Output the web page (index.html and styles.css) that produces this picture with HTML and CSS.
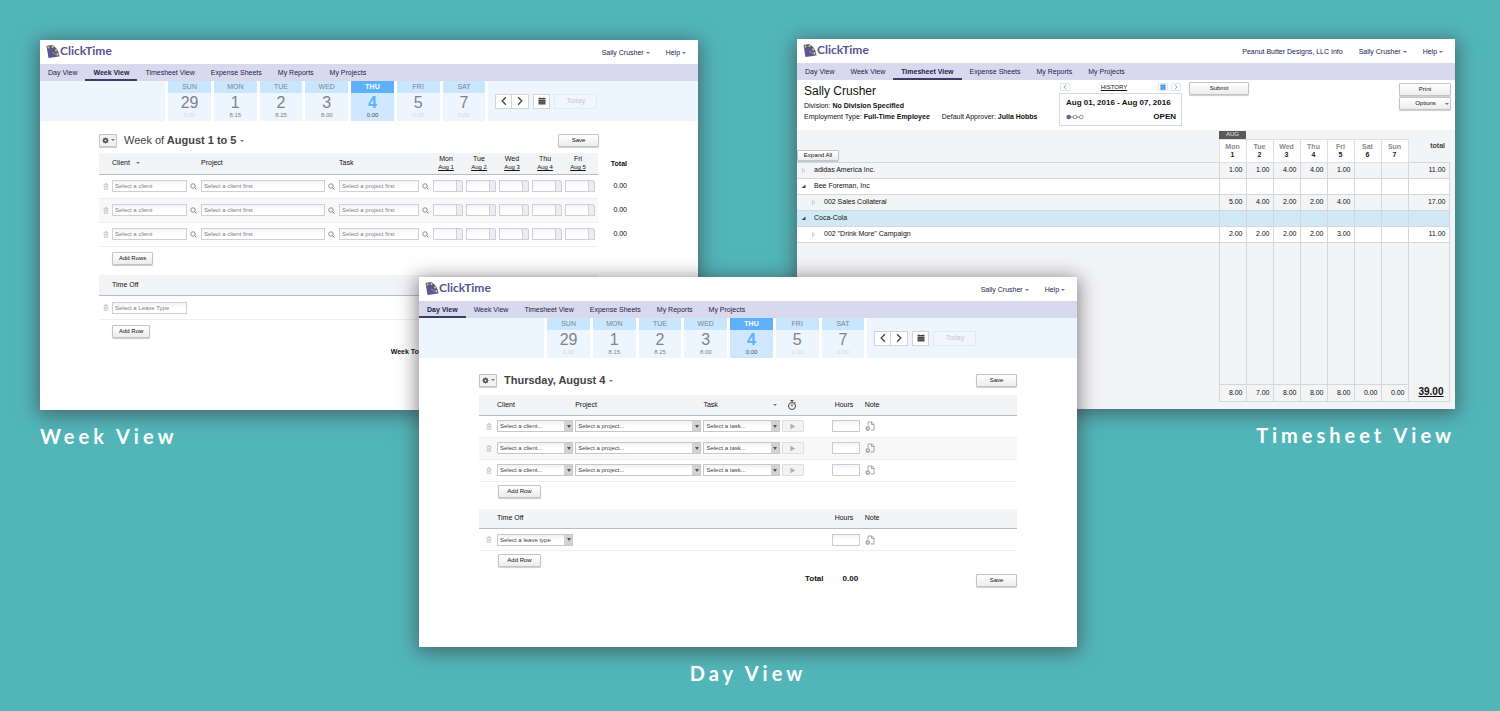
FILE: index.html
```
<!DOCTYPE html>
<html lang="en">
<head>
<meta charset="utf-8">
<title>ClickTime views</title>
<link rel="stylesheet" href="styles.css">
</head>
<body>
<svg class="sprite" aria-hidden="true">
  <symbol id="i-logo" viewBox="0 0 26 26">
    <path d="M0 2 L11 0 C18 3 25 12 26 23 L4 26 Z" fill="#58588f"/>
    <path d="M11 14 L26 24" stroke="#c9c9e0" stroke-width="1"/>
    <circle cx="4" cy="5" r="2" fill="#e2e03a"/><circle cx="12" cy="4" r="2" fill="#e2e03a"/><circle cx="19" cy="11" r="2" fill="#e2e03a"/><circle cx="22" cy="18" r="2" fill="#e2e03a"/>
  </symbol>
  <symbol id="i-trash" viewBox="0 0 10 12"><path d="M1 3h8M3.500 3V1h3v2M2 3v8h6V3M4 5v4M6 5v4" fill="none" stroke="#b4b4b4"/></symbol>
  <symbol id="i-search" viewBox="0 0 14 14"><circle cx="6" cy="6" r="4.500" fill="none" stroke="#777" stroke-width="1.600"/><path d="M9.500 9.500 13 13" stroke="#777" stroke-width="2"/></symbol>
  <symbol id="i-gear" viewBox="0 0 14 14"><circle cx="7" cy="7" r="3.500" fill="none" stroke="#444" stroke-width="3"/><path d="M7 1v12M1 7h12M3 3l8 8M11 3 3 11" stroke="#444" stroke-width="1.800"/><circle cx="7" cy="7" r="2" fill="#f4f4f4"/></symbol>
  <symbol id="i-left" viewBox="0 0 12 16"><path d="M9 2 3 8l6 6" fill="none" stroke="currentColor" stroke-width="2"/></symbol>
  <symbol id="i-right" viewBox="0 0 12 16"><path d="m3 2 6 6-6 6" fill="none" stroke="currentColor" stroke-width="2"/></symbol>
  <symbol id="i-cal" viewBox="0 0 16 16"><path d="M1 2h14v3H1zM1 6h14v9H1z" fill="currentColor"/><path d="M1 9h14M1 12h14" stroke="#fff" stroke-opacity=".35"/><path d="M4 1v2M12 1v2" stroke="currentColor" stroke-width="2"/></symbol>
  <symbol id="i-note" viewBox="0 0 20 20"><path d="M6 10V2h8l4 4v12h-7M13 2v5h5" fill="none" stroke="#8e8e8e" stroke-width="1.500"/><circle cx="5.500" cy="15" r="4.500" fill="#999"/><path d="M5.500 12.500v5M3 15h5" stroke="#fff" stroke-width="1.300"/></symbol>
  <symbol id="i-watch" viewBox="0 0 20 20"><circle cx="10" cy="12" r="7" fill="none" stroke="#444" stroke-width="2"/><path d="M7 1h6M10 1v4M10 8v5M15 4l2 2" stroke="#444" stroke-width="2" fill="none"/></symbol>
  <symbol id="i-play" viewBox="0 0 10 10"><path d="M2 1v8l7-4z" fill="#b0b0b0"/></symbol>
  <symbol id="i-closed" viewBox="0 0 10 10"><path d="M3 1v8l5-4z" fill="#fff" stroke="#a5a5a5"/></symbol>
  <symbol id="i-open" viewBox="0 0 10 10"><path d="M9 1v7H1z" fill="#444"/></symbol>
  <symbol id="i-steps" viewBox="0 0 40 12"><path d="M6 6h28" stroke="#777" stroke-width="2"/><circle cx="6" cy="6" r="5" fill="#6a5d9b"/><circle cx="20" cy="6" r="4" fill="#fff" stroke="#888" stroke-width="2"/><circle cx="34" cy="6" r="4" fill="#fff" stroke="#888" stroke-width="2"/></symbol>
</svg>

<main class="showcase" id="showcase"></main>
<script src="app.js"></script>
</body>
</html>
```
FILE: app.js
```
const icon = (name, cls = '') => `<svg class="icon ${cls}" aria-hidden="true"><use href="#i-${name}"/></svg>`;
const times = (n, fn) => Array.from({ length: n }, (_, i) => fn(i)).join('');

const pages = ['Day View', 'Week View', 'Timesheet View', 'Expense Sheets', 'My Reports', 'My Projects'];

const header = (active, extra = '') => `
  <header class="brandbar">
    <a class="brand" href="#">${icon('logo', 'logo')}<span>ClickTime</span></a>
    <div class="account">${extra}<a href="#">Sally Crusher <i class="caret"></i></a><a href="#">Help <i class="caret"></i></a></div>
  </header>
  <nav class="nav">${pages.map(p => `<a href="#"${p === active ? ' class="active"' : ''}>${p}</a>`).join('')}</nav>`;

const days = [['SUN', 29, '0.00', 'empty'], ['MON', 1, '8.15', ''], ['TUE', 2, '8.25', ''], ['WED', 3, '8.00', ''],
  ['THU', 4, '0.00', 'current'], ['FRI', 5, '0.00', 'empty'], ['SAT', 7, '0.00', 'empty']];

const strip = () => `
  <div class="strip">
    <div class="strip-side"></div>
    ${days.map(d => `<div class="day ${d[3]}"><span class="day-name">${d[0]}</span><span class="day-num">${d[1]}</span><span class="day-hours">${d[2]}</span></div>`).join('')}
    <div class="strip-side strip-tools">
      <div class="pager"><button aria-label="Previous">${icon('left', 'chev')}</button><button aria-label="Next">${icon('right', 'chev')}</button></div>
      <button class="cal" aria-label="Calendar">${icon('cal', 'calicon')}</button>
      <button class="today" disabled>Today</button>
    </div>
  </div>`;

const title = (html) => `
  <div class="title">
    <button class="btn gear" aria-label="Settings">${icon('gear', 'gearicon')}<i class="caret"></i></button>
    <h2>${html} <i class="caret"></i></h2>
    <button class="btn save">Save</button>
  </div>`;

const lookup = (text) => `<div class="lookup"><input class="field" type="text" aria-label="${text}" placeholder="${text}">${icon('search', 'search')}</div>`;
const trash = () => `<td class="trash">${icon('trash', 'trashicon')}</td>`;
const cols = (...w) => `<colgroup>${w.map(x => `<col style="width:${x}px">`).join('')}</colgroup>`;

const weekCols = cols(13, 89, 138, 94, 33, 33, 33, 33, 33, 31);
const week = `
  <figure class="card card-week">
    <div class="window">
      ${header('Week View')}${strip()}
      <section class="sheet week">
        ${title('<span>Week of</span> August 1 to 5')}
        <table class="grid">${weekCols}
          <thead><tr><th></th><th>Client <i class="caret sort"></i></th><th>Project</th><th>Task</th>
            ${['Mon', 'Tue', 'Wed', 'Thu', 'Fri'].map((d, i) => `<th class="dcol">${d}<a href="#">Aug ${i + 1}</a></th>`).join('')}
            <th class="total">Total</th></tr></thead>
          <tbody>${times(3, () => `<tr>${trash()}<td>${lookup('Select a client')}</td><td>${lookup('Select a client first')}</td><td>${lookup('Select a project first')}</td>
            ${times(5, () => '<td><div class="hours"><input class="field" type="text" aria-label="Hours"><span class="fold"></span></div></td>')}<td class="total">0.00</td></tr>`)}</tbody>
        </table>
        <div class="add"><button class="btn">Add Rows</button></div>
        <table class="grid">${weekCols}
          <thead><tr><th></th><th colspan="8">Time Off</th><th class="total"></th></tr></thead>
          <tbody><tr>${trash()}<td colspan="8"><input class="field leave" type="text" aria-label="Leave type" placeholder="Select a Leave Type"></td><td class="total"></td></tr></tbody>
        </table>
        <div class="add"><button class="btn">Add Row</button></div>
        <p class="week-total">Week Total</p>
      </section>
    </div>
    <figcaption>Week View</figcaption>
  </figure>`;

const select = (text) => `<div class="select"><select aria-label="${text}"><option>${text}</option></select></div>`;
const dayCols = cols(18, 78, 128, 78, 50, 33, 152);
const hoursNote = () => `<td><input class="field hour" type="text" aria-label="Hours"></td><td>${icon('note', 'note')}</td>`;
const day = `
  <figure class="card card-day">
    <div class="window">
      ${header('Day View')}${strip()}
      <section class="sheet daysheet">
        ${title('Thursday, August 4')}
        <table class="grid">${dayCols}
          <thead><tr><th></th><th>Client</th><th>Project</th><th><div class="spread">Task <i class="caret"></i></div></th><th class="watchcell">${icon('watch', 'watch')}</th><th class="hcol">Hours</th><th>Note</th></tr></thead>
          <tbody>${times(3, () => `<tr>${trash()}<td>${select('Select a client...')}</td><td>${select('Select a project...')}</td><td>${select('Select a task...')}</td><td><button class="btn play" aria-label="Start timer">${icon('play', 'playicon')}</button></td>${hoursNote()}</tr>`)}</tbody>
        </table>
        <div class="add"><button class="btn">Add Row</button></div>
        <table class="grid">${dayCols}
          <thead><tr><th></th><th colspan="4">Time Off</th><th class="hcol">Hours</th><th>Note</th></tr></thead>
          <tbody><tr>${trash()}<td>${select('Select a leave type')}</td><td colspan="3"></td>${hoursNote()}</tr></tbody>
        </table>
        <div class="add last"><button class="btn">Add Row</button></div>
        <div class="totals"><b>Total</b><b>0.00</b><button class="btn save">Save</button></div>
      </section>
    </div>
    <figcaption>Day View</figcaption>
  </figure>`;

const rows = [
  ['adidas America Inc.', 'closed', 0, ['1.00', '1.00', '4.00', '4.00', '1.00', '', ''], '11.00', ''],
  ['Bee Foreman, Inc', 'open', 0, Array(7).fill(''), '', 'white'],
  ['002 Sales Collateral', 'closed', 1, ['5.00', '4.00', '2.00', '2.00', '4.00', '', ''], '17.00', ''],
  ['Coca-Cola', 'open', 0, Array(7).fill(''), '', 'selected'],
  ['002 "Drink More" Campaign', 'closed', 1, ['2.00', '2.00', '2.00', '2.00', '3.00', '', ''], '11.00', 'white']];

const timesheet = `
  <figure class="card card-timesheet">
    <div class="window">
      ${header('Timesheet View', '<a href="#">Peanut Butter Designs, LLC Info</a>')}
      <section class="info">
        <div class="person">
          <h2>Sally Crusher</h2>
          <p><span>Division: <b>No Division Specified</b></span></p>
          <p><span>Employment Type: <b>Full-Time Employee</b></span><span>Default Approver: <b>Julia Hobbs</b></span></p>
        </div>
        <div class="period">
          <div class="history"><button aria-label="Previous period">${icon('left', 'mini')}</button><a href="#">HISTORY</a>
            <button aria-label="Pick period">${icon('cal', 'mini')}</button><button aria-label="Next period">${icon('right', 'mini')}</button></div>
          <div class="range"><b>Aug 01, 2016 - Aug 07, 2016</b><div class="status">${icon('steps', 'steps')}<b>OPEN</b></div></div>
        </div>
        <button class="btn submit">Submit</button>
        <div class="actions"><button class="btn">Print</button><button class="btn options"><span>Options</span><i class="caret"></i></button></div>
      </section>
      <section class="timesheet">
        <table class="ts">${cols(422, 27, 27, 27, 27, 27, 27, 27, 41)}
          <thead>
            <tr><th rowspan="2" class="expand"><button class="btn">Expand All</button></th><th class="month">AUG</th><th colspan="7"></th></tr>
            <tr>${['Mon', 'Tue', 'Wed', 'Thu', 'Fri', 'Sat', 'Sun'].map((d, i) => `<th class="date">${d}<b>${i + 1}</b></th>`).join('')}<th class="tstotal">total</th></tr>
          </thead>
          <tbody>
            ${rows.map(r => `<tr class="line ${r[5]}"><td class="name"><div class="node level${r[2]}">${icon(r[1], 'twisty')}${r[0]}</div></td>${r[3].map(v => `<td>${v}</td>`).join('')}<td>${r[4]}</td></tr>`).join('')}
            <tr class="filler"><td class="name"></td>${times(8, () => '<td></td>')}</tr>
          </tbody>
          <tfoot><tr><td class="name"></td>${['8.00', '7.00', '8.00', '8.00', '8.00', '0.00', '0.00'].map(v => `<td>${v}</td>`).join('')}<td class="grand">39.00</td></tr></tfoot>
        </table>
      </section>
    </div>
    <figcaption>Timesheet View</figcaption>
  </figure>`;

document.getElementById('showcase').innerHTML = week + timesheet + day;
```
FILE: styles.css
```
* { box-sizing: border-box; }
body { margin: 0; min-height: 100vh; background: #52b6b9; color: #111; font-family: "Liberation Sans", Arial, sans-serif; font-size: 7px; line-height: 8px; }
h2, p, figure { margin: 0; }
a { color: inherit; text-decoration: none; }
button, input, select { font: inherit; color: inherit; margin: 0; }
button { padding: 0; display: flex; align-items: center; justify-content: center; }
.sprite { display: none; }
.icon { display: block; flex: none; }

.showcase { display: grid; grid-template-columns: 379fr 279fr 99fr 280fr 378fr; align-items: start; padding: 40px 45px 20px 40px; }
.card { grid-row: 1; min-width: 0; }
.card-week { grid-column: 1 / 3; }
.card-timesheet { grid-column: 4 / 6; margin-top: -1px; }
.card-day { grid-column: 2 / 5; margin-top: 237px; z-index: 1; }
.window { min-height: 370px; background: #fff; box-shadow: 0 3px 18px 2px rgba(60, 50, 60, .6); }
figcaption { padding-top: 12px; color: #fff; font: bold 20px/28px Lato, sans-serif; letter-spacing: 4px; }
.card-timesheet figcaption { text-align: right; }
.card-day figcaption { text-align: center; }

.brandbar { display: flex; justify-content: space-between; align-items: center; height: 24px; padding: 0 12px 0 6px; }
.brand { display: flex; align-items: center; height: 20px; padding-bottom: 2px; color: #56568f; font: bold 12px/16px Lato, "Open Sans", sans-serif; }
.logo { width: 14px; height: 13px; }
.account { display: flex; gap: 16px; color: #24214f; padding-top: 2px; }
.caret { display: inline-block; border: 2px solid transparent; border-top-color: #777; border-bottom: 0; vertical-align: middle; }
.nav { display: flex; height: 17px; background: #d9d9ee; color: #24214f; }
.nav a { padding: 0 8px; line-height: 17px; border-bottom: 2px solid transparent; height: 17px; }
.nav .active { font-weight: bold; border-color: #3f3c6d; }

.strip { display: grid; grid-template-columns: 126fr repeat(7, 43fr) 211fr; gap: 3px; height: 40px; }
.strip-side { background: #edf5ff; }
.day { display: flex; flex-direction: column; align-items: center; background: #edf5ff; color: #808388; }
.day-name { align-self: stretch; text-align: center; background: #c9e6ff; line-height: 12px; height: 12px; }
.day-num { font-size: 16px; line-height: 19px; }
.day-hours { font-size: 6px; line-height: 6px; }
.empty .day-hours { color: #d3dae2; }
.current { background: #cfe7ff; }
.current .day-name { background: #5eb0fd; color: #fff; font-weight: bold; }
.current .day-num { color: #5eb0fd; font-weight: bold; }
.current .day-hours { color: #555; }
.strip-tools { display: flex; align-items: center; gap: 4px; padding-left: 7px; }
.strip-tools button { height: 15px; background: #fff; border: 1px solid #d4d4d8; color: #444; }
.pager { display: flex; }
.pager button { width: 17px; }
.pager button + button { border-left: 0; }
.chev { width: 8px; height: 10px; }
.strip-tools .cal { width: 17px; }
.calicon { width: 8px; height: 8px; }
.strip-tools .today { width: 43px; background: #f0f6ff; border-color: #e2eaf4; color: #c3c8d2; }

.btn { height: 13px; padding: 0 6px; border: 1px solid #c4c4c4; border-radius: 1px; background: linear-gradient(#fff, #ececec); box-shadow: 0 1px 1px rgba(0, 0, 0, .2); color: #111; font-size: 6px; font-weight: normal; line-height: 7px; }
.sheet { padding: 12px 69px 0 59px; }
.title { display: flex; align-items: center; height: 14px; margin-bottom: 6px; }
.title h2 { margin-left: 7px; font-size: 11px; line-height: 14px; color: #444; }
.title h2 span { font-weight: normal; }
.title .save { margin-left: auto; }
.save { width: 41px; }
.gear { width: 18px; gap: 2px; padding: 0; background: #f1f1f1; }
.gearicon { width: 7px; height: 7px; }
.week .title { padding-right: 30px; }

.grid { width: 100%; table-layout: fixed; border-collapse: collapse; }
.grid th, .grid td { padding: 0; text-align: left; font-weight: normal; vertical-align: middle; }
.grid thead th { height: 21px; background: #f3f4f6; border-bottom: 1px solid #b9bbbd; }
.grid tbody td { height: 24px; border-bottom: 1px solid #efefef; }
.grid tbody tr:nth-child(even) td { background: #f8f8f8; }
.grid .dcol { text-align: center; padding-right: 7px; }
.dcol a { display: block; font-size: 6px; line-height: 8px; text-decoration: underline; }
.grid thead .total, .grid tbody tr td.total, .grid tbody tr:nth-child(even) td.total { background: none; border-bottom: 0; text-align: right; padding-right: 2px; }
.grid thead .total { font-weight: bold; }
.sort { margin-left: 4px; }
.trashicon { width: 6px; height: 7px; margin-left: 4px; }
.field { display: block; width: 100%; height: 12px; padding: 0 2px; border: 1px solid #cfcfda; background: linear-gradient(#f3f3f8, #fff 5px); border-radius: 0; font-size: 6px; }
.field::placeholder { color: #7d7d7d; opacity: 1; }
.lookup { display: flex; align-items: center; gap: 3px; padding-right: 4px; }
.lookup .field { flex: 1; min-width: 0; }
.search { width: 7px; height: 7px; }
.hours { display: flex; width: 30px; }
.hours .field { width: 24px; }
.fold { width: 6px; border: 1px solid #cfcfda; border-left: 0; border-top-right-radius: 3px; background: #ededf1; }
.leave { width: 75px; }
.add { display: flex; align-items: flex-start; height: 28px; padding: 5px 0 0 13px; }
.week-total { width: 328px; text-align: right; font-weight: bold; }

.daysheet { padding: 15px 60px 0; }
.daysheet .title { margin-bottom: 8px; }
.daysheet .grid thead th { height: 20px; }
.daysheet .grid tbody td { height: 22px; }
.daysheet .add { height: 27px; padding: 3px 0 0 19px; }
.daysheet .add .btn { width: 43px; }
.daysheet .last { height: 23px; }
.daysheet .trashicon { margin-left: 7px; }
.spread { display: flex; justify-content: space-between; align-items: center; padding-right: 5px; }
.watch { width: 10px; height: 10px; }
.grid .watchcell { padding-left: 5px; }
.grid .hcol { padding-left: 3px; }
.select { display: grid; grid-template-columns: 1fr 9px; margin-right: 2px; }
.select::after { content: ""; grid-area: 1 / 2; align-self: center; justify-self: center; border: 2px solid transparent; border-top: 3px solid #555; border-bottom: 0; pointer-events: none; }
.select select { grid-area: 1 / 1 / 2 / 3; width: 100%; min-width: 0; height: 12px; padding: 0 10px 0 2px; appearance: none; border: 1px solid #c5c8cc; border-radius: 0; background: linear-gradient(#d2d2d2, #d2d2d2) right / 8px 100% no-repeat, linear-gradient(#f1f1f1, #fff 5px); font-size: 6px; color: #444; }
.play { width: 22px; height: 12px; background: #f3f3f3; border-color: #dedede; box-shadow: none; }
.playicon { width: 7px; height: 7px; }
.hour { width: 28px; border-color: #c8ccd0; }
.note { width: 10px; height: 10px; }
.totals { display: flex; font-size: 8px; gap: 19px; padding-left: 326px; line-height: 9px; }
.totals .save { margin-left: auto; }

.info { display: flex; align-items: flex-start; height: 50px; padding: 2px 4px 0 7px; }
.person { width: 255px; }
.person h2 { font-size: 12px; line-height: 18px; font-weight: normal; }
.person p { display: flex; gap: 12px; line-height: 11px; }
.period { width: 123px; }
.history { display: flex; align-items: center; gap: 3px; height: 11px; padding: 0 1px 2px; font-size: 6px; }
.history a { margin: 0 auto; text-decoration: underline; }
.history button { width: 10px; height: 8px; border: 1px solid #dfe6ee; border-radius: 1px; background: #fff; color: #3d94dc; }
.mini { width: 6px; height: 6px; }
.range { border: 1px solid #d9d9d9; height: 33px; padding: 3px 5px 0 6px; font-size: 8px; line-height: 12px; }
.status { display: flex; justify-content: space-between; align-items: center; margin-top: 2px; }
.steps { width: 18px; height: 6px; }
.submit { width: 60px; margin-left: 7px; }
.actions { display: grid; gap: 1px; width: 52px; margin: 1px 0 0 auto; }
.options span { margin: 0 auto; }
.options { padding-right: 1px; }

.timesheet { padding: 1px 6px 7px 0; background: #f3f4f6; }
.ts { width: 100%; table-layout: fixed; border-collapse: collapse; }
.ts th, .ts td { padding: 0 3px 0 0; border: 1px solid #d5d7d9; text-align: right; vertical-align: middle; }
.ts th { padding: 0; border: 0; text-align: center; }
.ts .month { height: 8px; background: #5a5a5a; color: #e8e8e8; font-weight: normal; font-size: 6px; line-height: 7px; }
.ts .date { height: 23px; background: #fff; border: 1px solid #e0e0e0; color: #8a8a8a; }
.date b { display: block; color: #222; }
.ts .tstotal { text-align: right; padding-right: 4px; color: #444; vertical-align: top; padding-top: 3px; }
.ts .expand { vertical-align: bottom; padding-bottom: 1px; }
.expand .btn { height: 11px; width: 42px; padding: 0; }
.line { height: 16px; }
.line.white { background: #fff; }
.line.selected { background: #d1e9f7; }
.ts .name { border-left: 0; text-align: left; }
.node { display: flex; align-items: center; gap: 8px; padding-left: 4px; }
.node.level1 { padding-left: 14px; }
.twisty { width: 5px; height: 5px; }
.filler { height: 142px; }
.filler .name, tfoot .name { border: 0; }
tfoot tr { height: 17px; }
.ts .grand { border-top: 0; font-size: 10px; font-weight: bold; text-decoration: underline; padding-right: 5px; }
.filler td:last-child { border-bottom: 0; }
```
